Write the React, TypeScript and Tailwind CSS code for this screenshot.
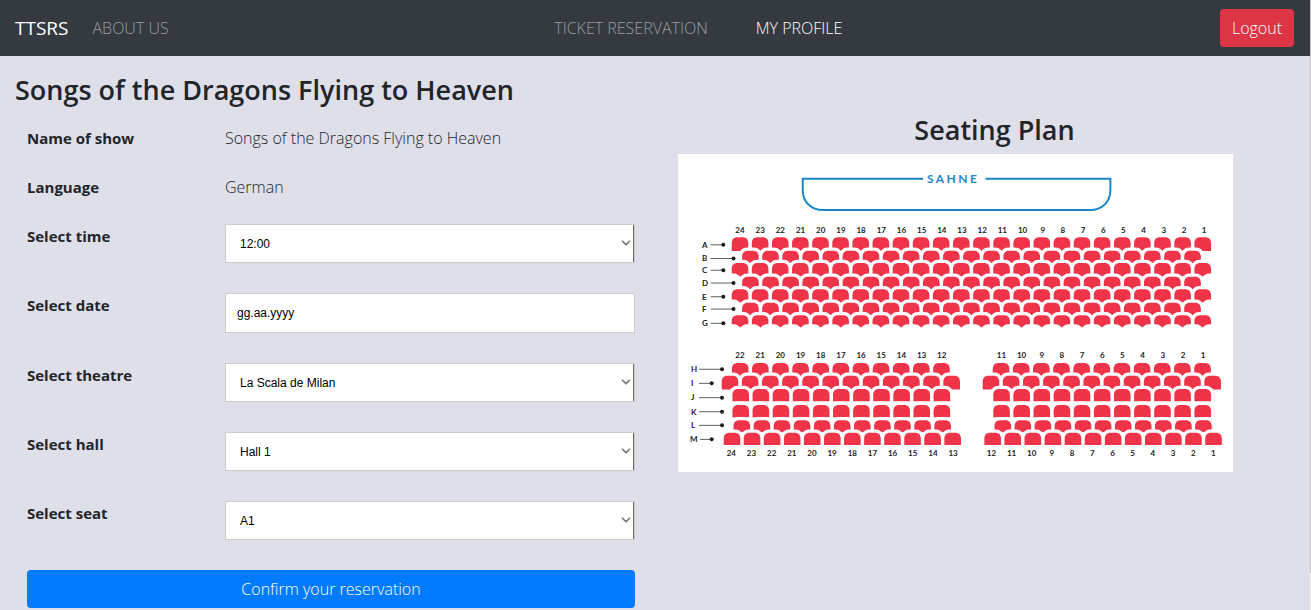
import React from "react";
import { ChevronDown } from "lucide-react";

type SeatRow = {
  y: number;
  h: number;
  from: number;
  to: number;
  count: number;
  gapFrom?: number;
  gapTo?: number;
  gapCount?: number;
  empty?: boolean;
};

const frontRows: SeatRow[] = [
  { y: 83.3, h: 13.7, from: 62, to: 524.6, count: 24 },
  { y: 96.7, h: 13, from: 72.4, to: 514.4, count: 23 },
  { y: 109, h: 13.4, from: 62, to: 524.6, count: 24 },
  { y: 122.7, h: 13, from: 72.4, to: 514.4, count: 23, gapFrom: 52.3, gapTo: 534.5, gapCount: 25 },
  { y: 135.3, h: 13.4, from: 62, to: 524.6, count: 24 },
  { y: 148.7, h: 13, from: 72.4, to: 514.4, count: 23, gapFrom: 52.3, gapTo: 534.5, gapCount: 25 },
  { y: 161.2, h: 13, from: 62, to: 524.6, count: 24 },
  { y: 173.6, h: 10, from: 52.3, to: 534.5, count: 25, empty: true },
];

const leftRows: SeatRow[] = [
  { y: 209, h: 13, from: 62.2, to: 263.4, count: 11 },
  { y: 221.7, h: 13.7, from: 52, to: 273.6, count: 12 },
  { y: 235, h: 12.2, from: 62.7, to: 263.8, count: 11 },
  { y: 251, h: 12.2, from: 62.7, to: 263.8, count: 11 },
  { y: 266.2, h: 12, from: 63.8, to: 264.6, count: 11 },
  { y: 278.7, h: 12.2, from: 54, to: 274.6, count: 12 },
];

const rightRows: SeatRow[] = [
  { y: 209, h: 13, from: 323, to: 524.4, count: 11 },
  { y: 221.7, h: 13.7, from: 312.9, to: 534.5, count: 12 },
  { y: 235, h: 12.2, from: 323.5, to: 524.6, count: 11 },
  { y: 251, h: 12.2, from: 323.5, to: 524.6, count: 11 },
  { y: 266.2, h: 12, from: 324.7, to: 525.3, count: 11 },
  { y: 278.7, h: 12.2, from: 314.6, to: 535.4, count: 12 },
];

const rowMarks = [
  { label: "A", x: 24, y: 90.8, start: 32.7, end: 45.3 },
  { label: "B", x: 24, y: 104.5, start: 32.7, end: 55.5 },
  { label: "C", x: 24, y: 116.2, start: 32.7, end: 45.3 },
  { label: "D", x: 24, y: 129, start: 32.7, end: 55.5 },
  { label: "E", x: 24, y: 142.7, start: 32.7, end: 45.3 },
  { label: "F", x: 24, y: 155, start: 32.7, end: 55.5 },
  { label: "G", x: 24, y: 169.3, start: 32.7, end: 45.3 },
  { label: "H", x: 13, y: 215.2, start: 21, end: 44 },
  { label: "I", x: 13, y: 229.3, start: 21, end: 33.7 },
  { label: "J", x: 13, y: 243.6, start: 21, end: 44 },
  { label: "K", x: 13, y: 257.7, start: 21, end: 44 },
  { label: "L", x: 13, y: 271.3, start: 21, end: 44 },
  { label: "M", x: 12, y: 285.3, start: 22, end: 33.7 },
];

const numberRows = [
  { first: 24, last: 1, from: 62, to: 526, y: 79.4 },
  { first: 22, last: 12, from: 62, to: 263.7, y: 204 },
  { first: 11, last: 1, from: 323.3, to: 525, y: 204 },
  { first: 24, last: 13, from: 53.3, to: 275, y: 301.7 },
  { first: 12, last: 1, from: 313.3, to: 535.3, y: 301.7 },
];

const spread = (from: number, to: number, count: number) =>
  Array.from({ length: count }, (_, i) => from + ((to - from) * i) / (count - 1));

const seatPath = (x: number, y: number, h: number) =>
  `M${x - 8.3} ${y + h}V${y + 6}C${x - 8.3} ${y + 2} ${x - 6} ${y} ${x - 2.5} ${y}H${x + 2.5}C${x + 6} ${y} ${x + 8.3} ${y + 2} ${x + 8.3} ${y + 6}V${y + h}Z`;

// White margin around a seat; it cuts the seats of the row behind.
const marginPath = (x: number, y: number, h: number) =>
  `M${x - 11.2} ${y + h}V${y + 2}C${x - 9.4} ${y - 1.4} ${x - 7} ${y - 3.3} ${x - 3} ${y - 3.3}H${x + 3}C${x + 7} ${y - 3.3} ${x + 9.4} ${y - 1.4} ${x + 11.2} ${y + 2}V${y + h}Z`;

function Seats({ rows }: { rows: SeatRow[] }) {
  return (
    <>
      {rows.map((r) => {
        const seats = spread(r.from, r.to, r.count).map((x) => seatPath(x, r.y, r.h)).join("");
        const margins = spread(r.gapFrom ?? r.from, r.gapTo ?? r.to, r.gapCount ?? r.count)
          .map((x) => marginPath(x, r.y, r.h))
          .join("");
        return (
          <g key={r.y}>
            <path d={margins} fill="#fff" />
            {!r.empty && <path d={seats} fill="#ef3349" />}
          </g>
        );
      })}
    </>
  );
}

function SeatingPlan() {
  return (
    <svg viewBox="0 0 555 318" className="block w-[87.7%] bg-white" role="img" aria-label="Seating Plan">
      <path
        d="M245 24.7H124.7V36C124.7 48 133 56 145 56H412C424 56 432.3 48 432.3 36V24.7H307.3"
        fill="none"
        stroke="#1b87c9"
        strokeWidth="2"
      />
      <text x="249" y="28.7" fill="#1b87c9" className="font-['Lato',sans-serif] text-[12px] font-bold tracking-[0.2em]">
        SAHNE
      </text>
      <Seats rows={frontRows} />
      <Seats rows={leftRows} />
      <Seats rows={rightRows} />
      <g fill="#1c1c1c" className="font-['Lato',sans-serif] text-[8px] font-bold">
        {rowMarks.map((m) => (
          <g key={m.label}>
            <text x={m.x} y={m.y + 2.8}>{m.label}</text>
            <path d={`M${m.start} ${m.y}H${m.end}`} stroke="#1c1c1c" strokeWidth="0.7" />
            <circle cx={m.end} cy={m.y} r="2" />
          </g>
        ))}
        {numberRows.map((n) =>
          spread(n.from, n.to, n.first - n.last + 1).map((x, i) => (
            <text key={`${n.y}-${x}`} x={x} y={n.y} textAnchor="middle">
              {n.first - i}
            </text>
          )),
        )}
      </g>
    </svg>
  );
}

function InfoRow({ label, value }: { label: string; value: string }) {
  return (
    <div className="grid grid-cols-[198px_1fr] leading-6">
      <dt className="text-[15px] font-bold leading-6">{label}</dt>
      <dd className="font-light">{value}</dd>
    </div>
  );
}

function SelectRow({ id, label, options }: { id: string; label: string; options: string[] }) {
  return (
    <div className="grid grid-cols-[198px_1fr]">
      <label htmlFor={id} className="text-[15px] font-bold leading-6">{label}</label>
      <div className="relative">
        <select
          id={id}
          className="block h-[39px] w-full appearance-none border border-[#ccc] bg-white pl-[14px] pr-6 font-['Liberation_Sans',Arial,sans-serif] text-[12px] text-black shadow-[inset_-1px_0_0_#6b6b66]"
        >
          {options.map((o) => (
            <option key={o}>{o}</option>
          ))}
        </select>
        <ChevronDown className="pointer-events-none absolute right-[2px] top-3 size-[14px] text-[#767676]" strokeWidth={3} />
      </div>
    </div>
  );
}

export default function App() {
  return (
    <div className="relative min-h-screen bg-[#dfdfe9] font-['Open_Sans','Noto_Sans',sans-serif] text-[16px] text-[#212529]">
      <nav className="flex h-14 items-center justify-between bg-[#343a40] pl-[15px] pr-[17px] font-light text-[#9a9da0]">
        <div className="flex items-center gap-6">
          <a href="#" className="text-[19px] font-normal text-white">TTSRS</a>
          <a href="#about">ABOUT US</a>
        </div>
        <div className="flex items-center gap-12 pl-2">
          <a href="#tickets">TICKET RESERVATION</a>
          <a href="#profile" className="text-white">MY PROFILE</a>
        </div>
        <button type="button" className="h-[38px] rounded bg-[#dc3545] px-3 text-white">Logout</button>
      </nav>

      <main>
        <h1 className="pl-[15px] pt-[17px] text-[27px] font-semibold leading-[34px]">
          Songs of the Dragons Flying to Heaven
        </h1>
        <div className="grid grid-cols-[608fr_633fr] gap-[43px] pl-[27px]">
          <form className="pb-[2px] pt-[19px]" onSubmit={(e) => e.preventDefault()}>
            <dl className="mb-[25px] flex flex-col gap-[25px]">
              <InfoRow label="Name of show" value="Songs of the Dragons Flying to Heaven" />
              <InfoRow label="Language" value="German" />
            </dl>
            <div className="flex flex-col gap-[30px]">
              <SelectRow id="time" label="Select time" options={["12:00"]} />
              <div className="grid grid-cols-[198px_1fr]">
                <label htmlFor="date" className="text-[15px] font-bold leading-6">Select date</label>
                <input
                  id="date"
                  type="text"
                  placeholder="gg.aa.yyyy"
                  className="h-10 w-full border border-[#ccc] bg-white px-[11px] font-['Liberation_Sans',Arial,sans-serif] text-[12px] placeholder:text-black"
                />
              </div>
              <SelectRow id="theatre" label="Select theatre" options={["La Scala de Milan"]} />
              <SelectRow id="hall" label="Select hall" options={["Hall 1"]} />
              <SelectRow id="seat" label="Select seat" options={["A1"]} />
              <button type="submit" className="h-[38px] rounded bg-[#007bff] font-light text-white">
                Confirm your reservation
              </button>
            </div>
          </form>
          <section className="pt-[7px]">
            <h2 className="mb-2 text-center text-[27px] font-semibold leading-[32px]">Seating Plan</h2>
            <SeatingPlan />
          </section>
        </div>
      </main>

      <div className="absolute inset-y-0 right-0 w-px bg-[#f1f1f1]">
        <div className="h-[94%] bg-[#c8c8cc]" />
      </div>
    </div>
  );
}
